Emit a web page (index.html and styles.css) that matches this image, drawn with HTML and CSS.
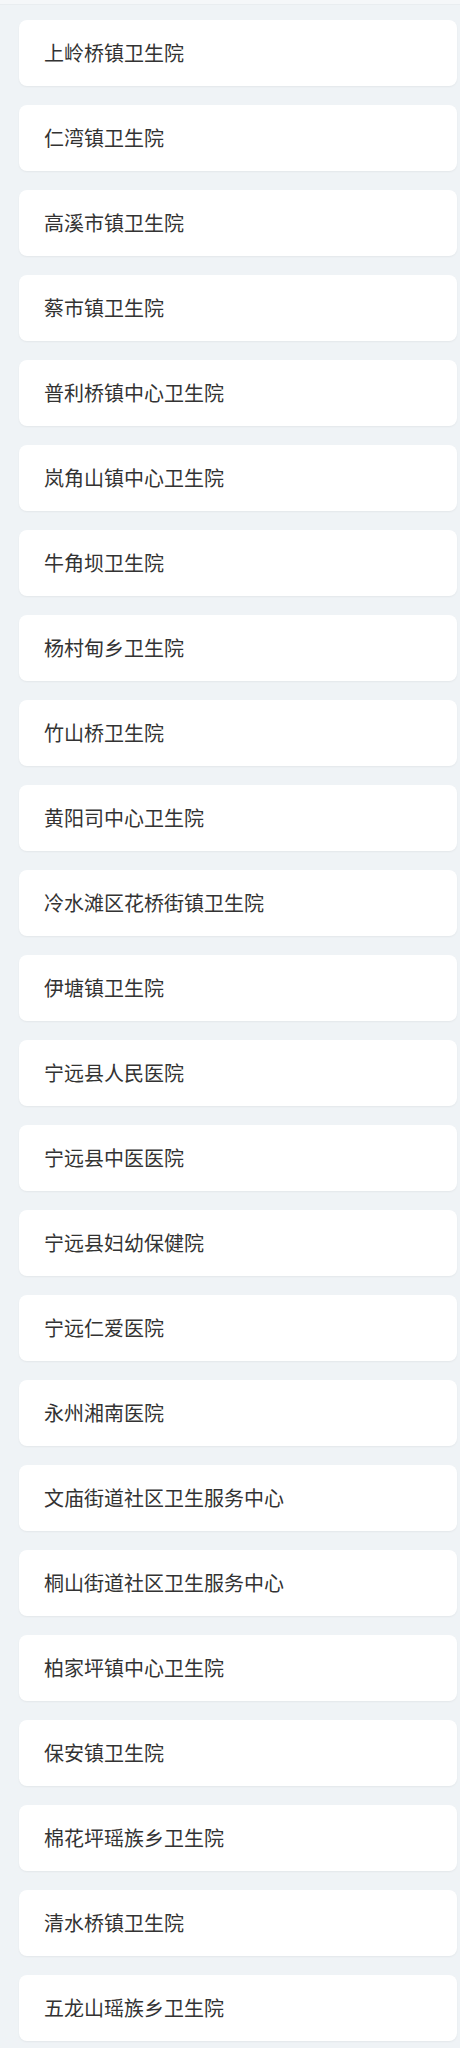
FILE: index.html
```html
<!DOCTYPE html>
<html lang="zh">
<head>
<meta charset="utf-8">
<link rel="stylesheet" href="styles.css">
</head>
<body>
<div class="topbar"></div>
<ul class="list">
<li class="card">上岭桥镇卫生院</li>
<li class="card">仁湾镇卫生院</li>
<li class="card">高溪市镇卫生院</li>
<li class="card">蔡市镇卫生院</li>
<li class="card">普利桥镇中心卫生院</li>
<li class="card">岚角山镇中心卫生院</li>
<li class="card">牛角坝卫生院</li>
<li class="card">杨村甸乡卫生院</li>
<li class="card">竹山桥卫生院</li>
<li class="card">黄阳司中心卫生院</li>
<li class="card">冷水滩区花桥街镇卫生院</li>
<li class="card">伊塘镇卫生院</li>
<li class="card">宁远县人民医院</li>
<li class="card">宁远县中医医院</li>
<li class="card">宁远县妇幼保健院</li>
<li class="card">宁远仁爱医院</li>
<li class="card">永州湘南医院</li>
<li class="card">文庙街道社区卫生服务中心</li>
<li class="card">桐山街道社区卫生服务中心</li>
<li class="card">柏家坪镇中心卫生院</li>
<li class="card">保安镇卫生院</li>
<li class="card">棉花坪瑶族乡卫生院</li>
<li class="card">清水桥镇卫生院</li>
<li class="card">五龙山瑶族乡卫生院</li>
</ul>
</body>
</html>
```
FILE: styles.css
```css
html, body {
  margin: 0;
  padding: 0;
  background: #eff3f6;
}
body {
  font-family: "Noto Sans CJK SC", "Noto Sans", sans-serif;
  color: #333333;
}
.topbar {
  height: 4px;
  background: #f5f7f9;
  border-bottom: 1px solid #e9edf0;
}
.list {
  list-style: none;
  margin: 0;
  padding: 15px 3px 20px 19px;
  display: flex;
  flex-direction: column;
  gap: 19px;
}
.card {
  height: 66px;
  box-sizing: border-box;
  display: flex;
  align-items: center;
  padding: 0 25px;
  background: #ffffff;
  border-radius: 8px;
  box-shadow: 0 1px 2px rgba(0, 0, 0, 0.05);
  font-size: 20px;
  line-height: 1;
}
```
